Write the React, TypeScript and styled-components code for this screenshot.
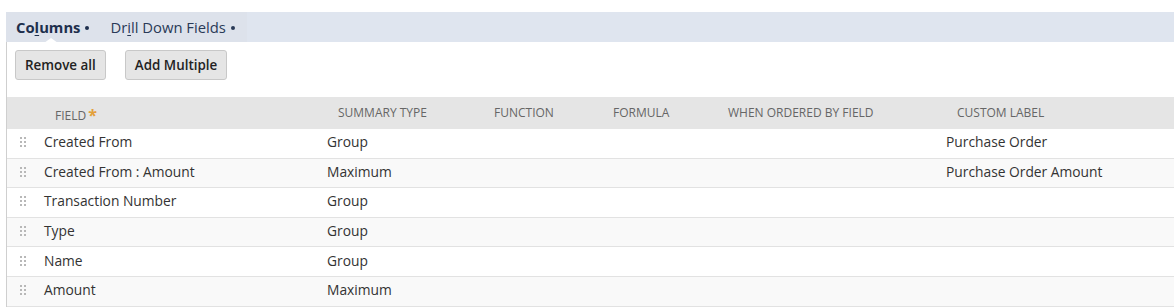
import React from 'react';
import styled, { createGlobalStyle } from 'styled-components';

const GlobalStyle = createGlobalStyle`
  html, body {
    margin: 0;
    padding: 0;
    background: #fff;
    font-family: "Open Sans", "Liberation Sans", Arial, sans-serif;
  }
`;

const columns = [
  { key: 'field', label: 'FIELD', required: true },
  { key: 'summary', label: 'SUMMARY TYPE' },
  { key: 'fn', label: 'FUNCTION' },
  { key: 'formula', label: 'FORMULA' },
  { key: 'when', label: 'WHEN ORDERED BY FIELD' },
  { key: 'label', label: 'CUSTOM LABEL' },
];

const rows = [
  { field: 'Created From', summary: 'Group', label: 'Purchase Order' },
  { field: 'Created From : Amount', summary: 'Maximum', label: 'Purchase Order Amount' },
  { field: 'Transaction Number', summary: 'Group', label: '' },
  { field: 'Type', summary: 'Group', label: '' },
  { field: 'Name', summary: 'Group', label: '' },
  { field: 'Amount', summary: 'Maximum', label: '' },
];

const GRID = '38px 283px 156px 119px 115px 229px 1fr';

export default function App() {
  return (
    <>
      <GlobalStyle />
      <Page>
        <TabBar>
          <Tabs>
            <Tab active>
              Co<u>l</u>umns<Dot />
            </Tab>
            <Tab>
              Dr<u>i</u>ll Down Fields<Dot />
            </Tab>
          </Tabs>
        </TabBar>
        <Body>
          <Toolbar>
            <Button>Remove all</Button>
            <Button>Add Multiple</Button>
          </Toolbar>
          <HeaderRow>
            <span />
            {columns.map((c) => (
              <HeaderCell key={c.key} required={c.required}>
                {c.label}
                {c.required && <Star>*</Star>}
              </HeaderCell>
            ))}
          </HeaderRow>
          {rows.map((r, i) => (
            <Row key={i} striped={i % 2 === 1}>
              <Handle>
                <svg width="6" height="10" viewBox="0 0 6 10">
                  {[0, 4, 8].map((y) =>
                    [0, 4].map((x) => (
                      <rect key={`${x}-${y}`} x={x} y={y} width="2" height="2" fill="#b8b8b8" />
                    ))
                  )}
                </svg>
              </Handle>
              <Cell>{r.field}</Cell>
              <Cell>{r.summary}</Cell>
              <Cell />
              <Cell />
              <Cell />
              <Cell>{r.label}</Cell>
            </Row>
          ))}
        </Body>
      </Page>
    </>
  );
}

const Page = styled.div`
  padding: 12px 0 0 6px;
`;

const TabBar = styled.div`
  height: 30px;
  background: #dfe5ef;
  display: flex;
`;

const Tabs = styled.div`
  display: flex;
  align-items: center;
  background: #dde2eb;
  padding: 0 12px 0 10px;
  gap: 21px;
`;

const Tab = styled.div<{ active?: boolean }>`
  position: relative;
  height: 30px;
  display: flex;
  align-items: center;
  font-size: 14.8px;
  font-weight: ${(p) => (p.active ? 700 : 400)};
  color: ${(p) => (p.active ? '#1e2f4d' : '#2a3a57')};
  white-space: nowrap;
  padding-bottom: 1px;

  u {
    text-decoration-thickness: 1px;
    text-underline-offset: 2px;
  }

  ${(p) =>
    p.active &&
    `
    &::after {
      content: '';
      position: absolute;
      left: 28px;
      bottom: 0;
      border-left: 7px solid transparent;
      border-right: 7px solid transparent;
      border-bottom: 5px solid #fff;
    }
  `}
`;

const Dot = styled.span`
  width: 4px;
  height: 4px;
  border-radius: 50%;
  background: currentColor;
  margin: 3px 0 0 5px;
`;

const Body = styled.div`
  border-left: 1px solid #cfcfcf;
  padding-top: 8px;
`;

const Toolbar = styled.div`
  display: flex;
  gap: 19px;
  padding-left: 8px;
  height: 47px;
  align-items: flex-start;
`;

const Button = styled.button`
  height: 30px;
  padding: 0 9px;
  background: #e5e5e5;
  border: 1px solid #c8c8c8;
  border-radius: 3px;
  font-family: "Open Sans", "Liberation Sans", Arial, sans-serif;
  font-size: 13.4px;
  font-weight: 600;
  color: #222;
`;

const HeaderRow = styled.div`
  display: grid;
  grid-template-columns: ${GRID};
  height: 32px;
  background: #e5e5e5;
  align-items: center;
`;

const HeaderCell = styled.div<{ required?: boolean }>`
  padding: ${(p) => (p.required ? '5px 0 0 10px' : '0 0 1px 10px')};
  font-size: 12px;
  color: #666;
  white-space: nowrap;
  display: flex;
  align-items: center;
`;

const Star = styled.span`
  color: #e3a03a;
  font-size: 16px;
  font-weight: 700;
  margin-left: 2px;
  line-height: 1;
  margin-top: -2px;
`;

const Row = styled.div<{ striped?: boolean }>`
  display: grid;
  grid-template-columns: ${GRID};
  height: 28.6px;
  border-bottom: 1px solid #e2e2e2;
  background: ${(p) => (p.striped ? '#f9f9f9' : '#fff')};
  align-items: center;
`;

const Handle = styled.div`
  display: flex;
  padding-left: 13px;
  align-items: center;
  padding-bottom: 2px;
`;

const Cell = styled.div`
  font-size: 13.8px;
  color: #333;
  white-space: nowrap;
  margin-left: -1px;
  padding-bottom: 3px;
`;
